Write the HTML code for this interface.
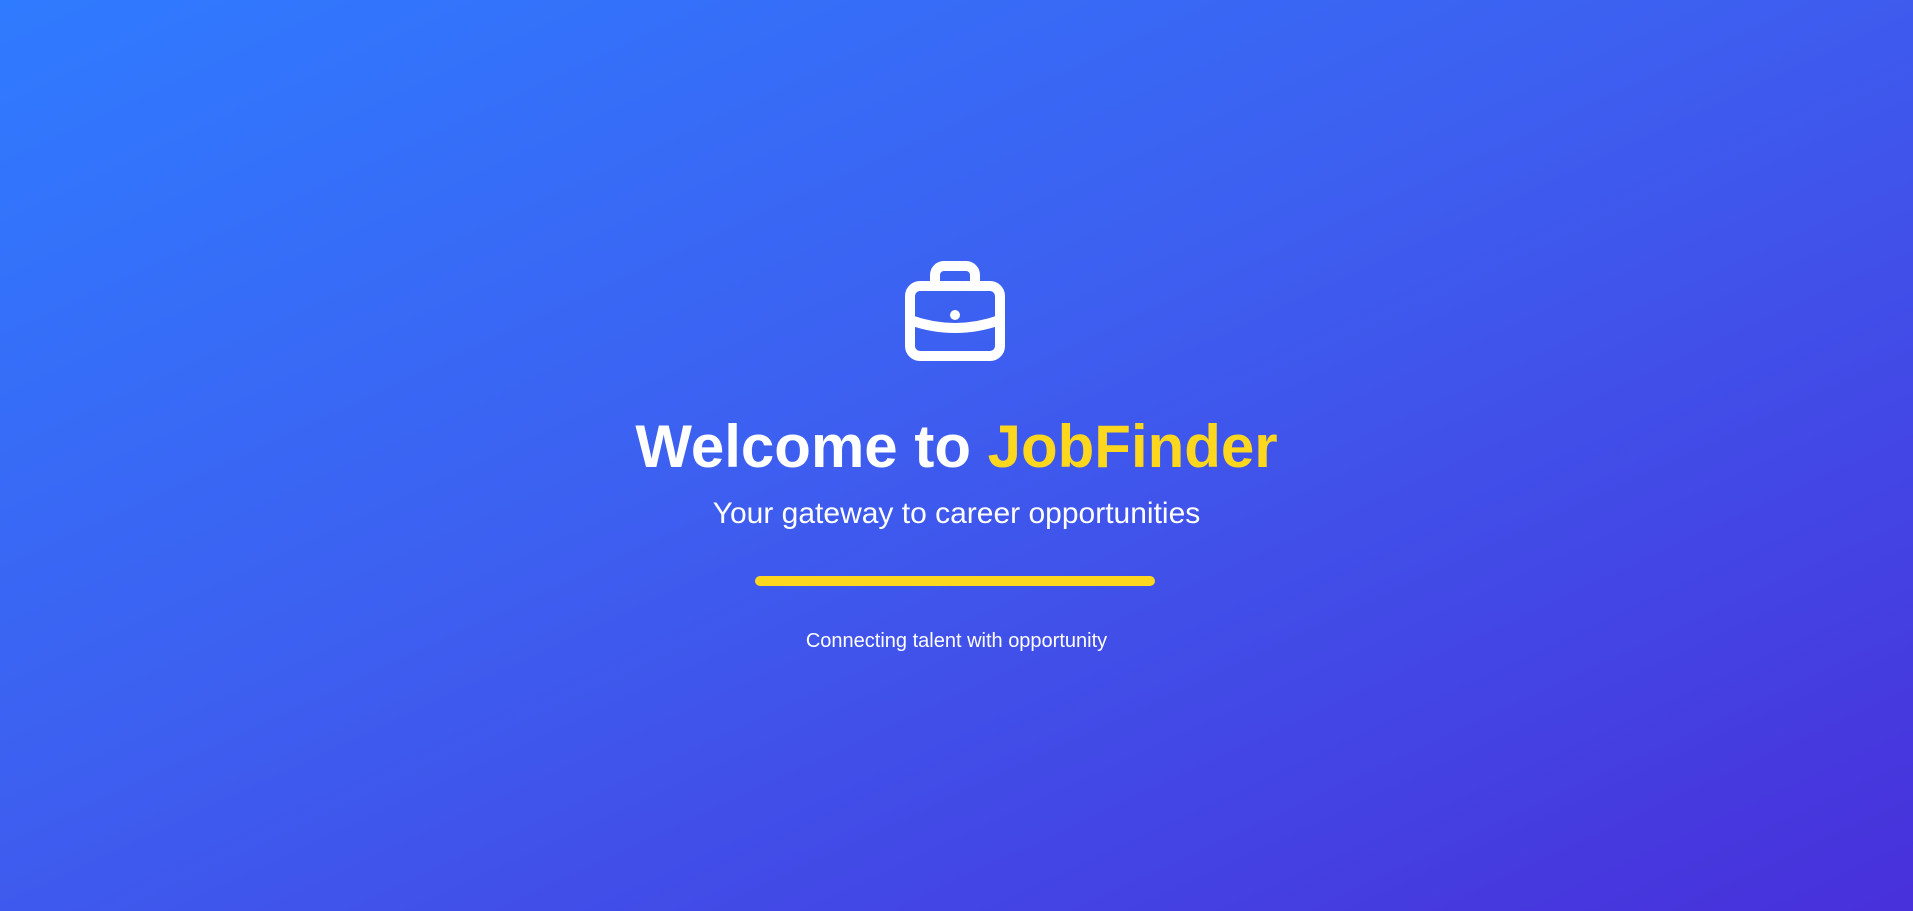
<!DOCTYPE html>
<html><head><meta charset="utf-8"><style>
html,body{margin:0;padding:0;width:1913px;height:911px;overflow:hidden}
body{background:linear-gradient(155deg,#2f7bff 0%,#3d5ff0 45%,#4830da 100%);font-family:"Liberation Sans",Arial,sans-serif;color:#fff;position:relative}
svg{position:absolute;left:0;top:0}
.t{position:absolute;left:0;width:1913px;text-align:center;white-space:nowrap}
h1{margin:0;font-size:60px;font-weight:bold;top:412px;line-height:70px}
h1 span{color:#fdd71e}
.s{font-size:30px;top:496px;line-height:36px}
.bar{position:absolute;left:755px;top:576px;width:400px;height:10px;border-radius:5px;background:#fdd71e}
.f{font-size:20px;top:629px;line-height:24px}
</style></head><body>
<svg width="1913" height="911" viewBox="0 0 1913 911">
<g fill="none" stroke="#fff" stroke-width="10" stroke-linecap="round" stroke-linejoin="round">
<rect x="910" y="286" width="90" height="70" rx="10"/>
<path d="M935 286 V275 a9 9 0 0 1 9 -9 H966 a9 9 0 0 1 9 9 V286"/>
<path d="M910 320 Q955 336 1000 320"/>
</g>
<circle cx="955" cy="315" r="5" fill="#fff"/>
</svg>
<h1 class="t">Welcome to <span>JobFinder</span></h1>
<div class="t s">Your gateway to career opportunities</div>
<div class="bar"></div>
<div class="t f">Connecting talent with opportunity</div>
</body></html>
